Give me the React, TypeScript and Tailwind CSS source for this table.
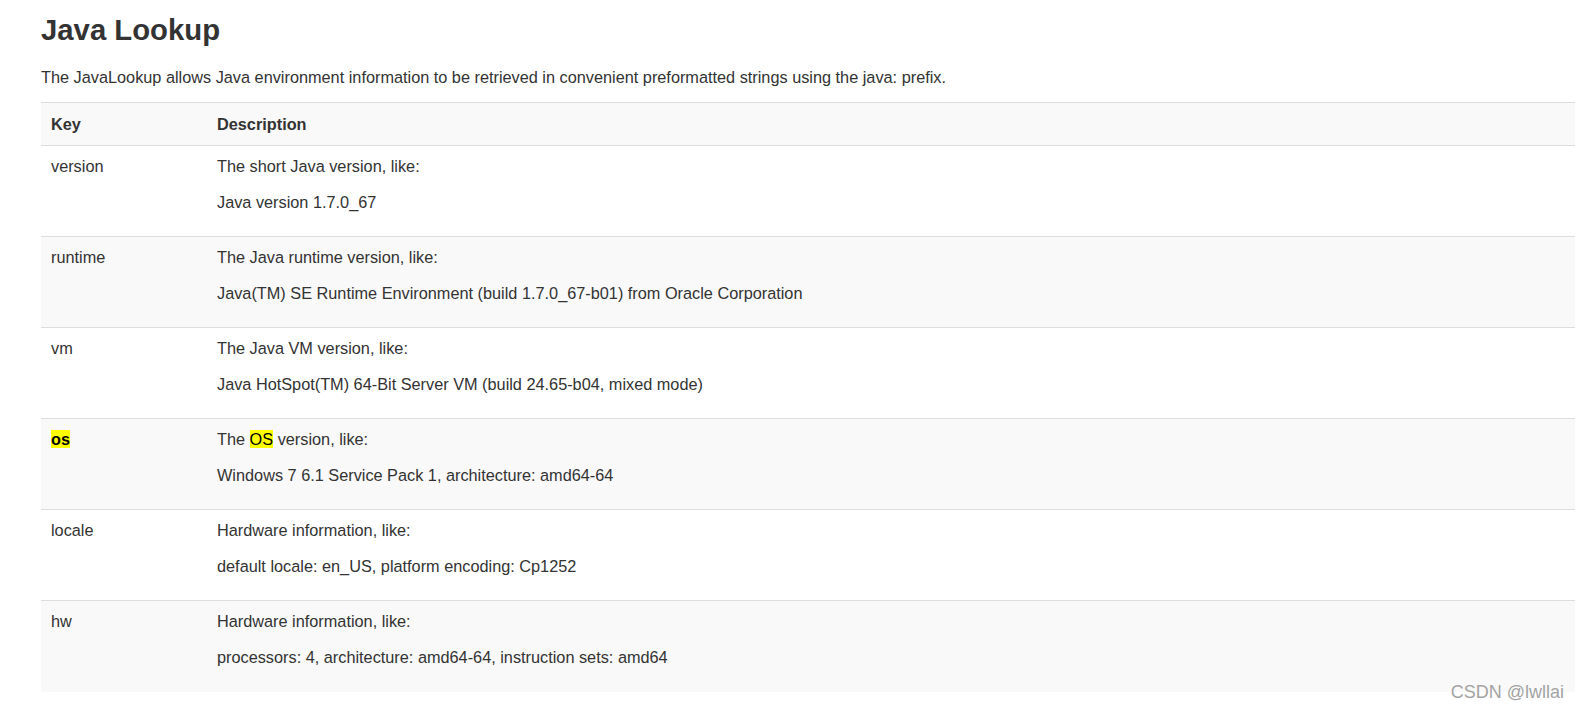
const rows: { key: React.ReactNode; title: React.ReactNode; example: string }[] = [
  {
    key: "version",
    title: "The short Java version, like:",
    example: "Java version 1.7.0_67",
  },
  {
    key: "runtime",
    title: "The Java runtime version, like:",
    example: "Java(TM) SE Runtime Environment (build 1.7.0_67-b01) from Oracle Corporation",
  },
  {
    key: "vm",
    title: "The Java VM version, like:",
    example: "Java HotSpot(TM) 64-Bit Server VM (build 24.65-b04, mixed mode)",
  },
  {
    key: <mark className="bg-[#ffff00] text-black font-bold">os</mark>,
    title: (
      <>
        The <mark className="bg-[#ffff00] text-black">OS</mark> version, like:
      </>
    ),
    example: "Windows 7 6.1 Service Pack 1, architecture: amd64-64",
  },
  {
    key: "locale",
    title: "Hardware information, like:",
    example: "default locale: en_US, platform encoding: Cp1252",
  },
  {
    key: "hw",
    title: "Hardware information, like:",
    example: "processors: 4, architecture: amd64-64, instruction sets: amd64",
  },
];

export default function App() {
  return (
    <div className="relative min-h-[708px] bg-white pl-[41px] pr-[3px] text-[#333] font-['Liberation_Sans',Arial,sans-serif]">
      <h1 className="pt-[12px] text-[29.3px] font-bold leading-[36px]">Java Lookup</h1>
      <p className="mt-[17px] text-[16.3px] leading-[24px]">
        The JavaLookup allows Java environment information to be retrieved in convenient preformatted strings using
        the java: prefix.
      </p>
      <div className="mt-[13px] border-t border-[#ddd] text-[16.3px] leading-[24px]">
        <div className="flex h-[43px] items-center border-b border-[#ddd] bg-[#f9f9f9] font-bold">
          <div className="w-[176px] pl-[10px]">Key</div>
          <div>Description</div>
        </div>
        {rows.map((r, i) => (
          <div
            key={i}
            className={`flex h-[91px] pt-[8px] ${i < rows.length - 1 ? "border-b border-[#ddd]" : ""} ${
              i % 2 === 1 ? "bg-[#f9f9f9]" : "bg-white"
            }`}
          >
            <div className="w-[176px] pl-[10px]">{r.key}</div>
            <div className="flex flex-col gap-[12px]">
              <p>{r.title}</p>
              <p>{r.example}</p>
            </div>
          </div>
        ))}
      </div>
      <div className="absolute right-[14px] top-[679px] text-[18px] text-[#a3a3a3] [text-shadow:0_0_1px_#fff]">
        CSDN @lwllai
      </div>
    </div>
  );
}
